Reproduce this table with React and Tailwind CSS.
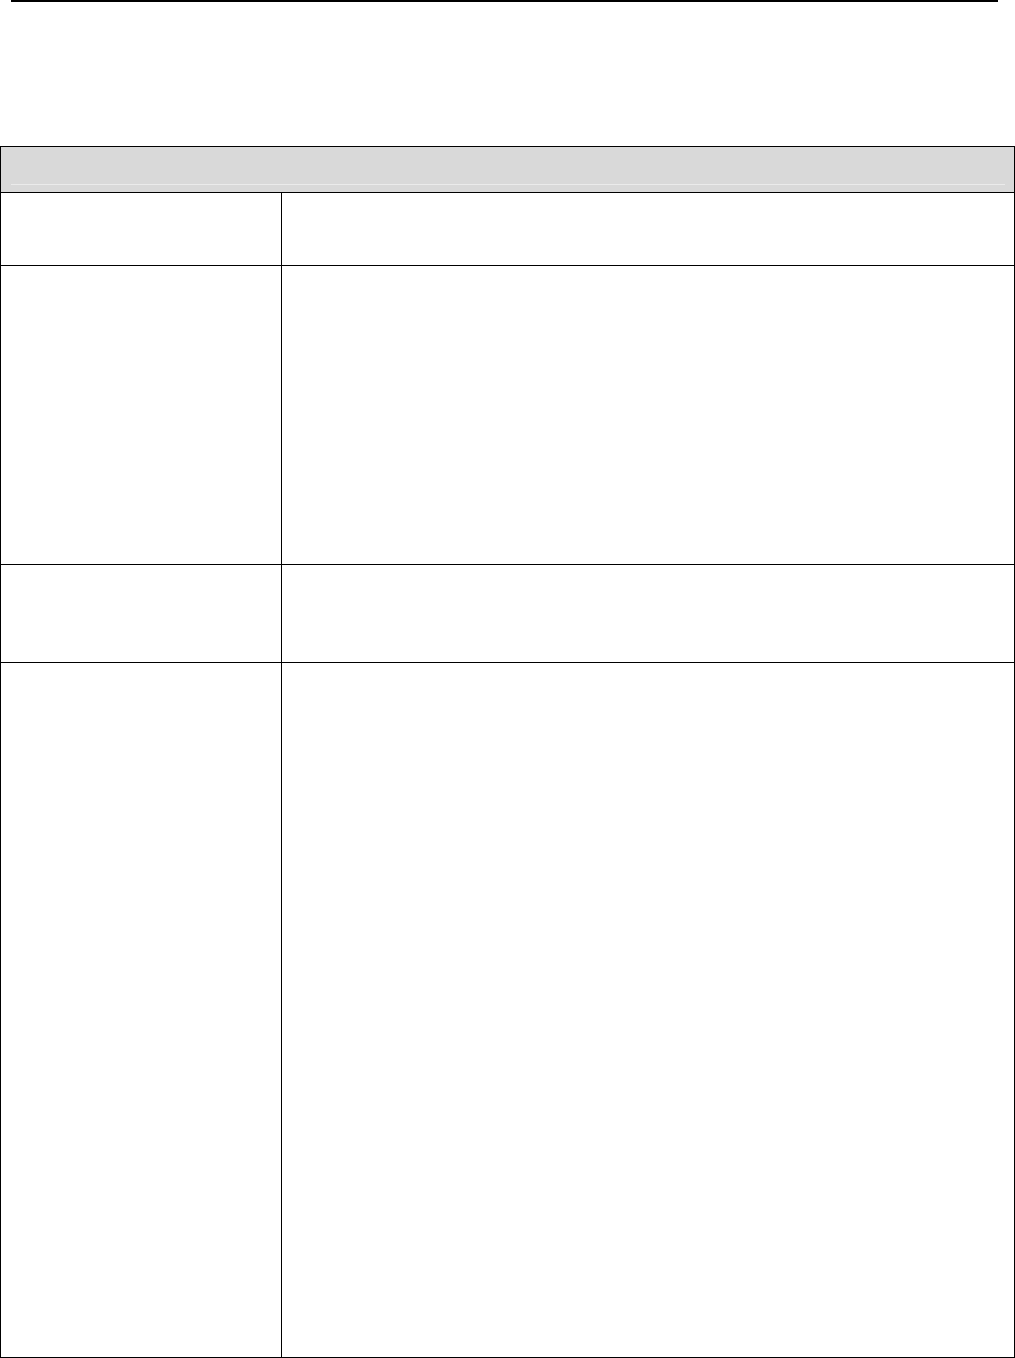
import React from "react";

const rows = [
  { h: "h-[73px]" },
  { h: "h-[299px]" },
  { h: "h-[98px]" },
  { h: "h-[694px]" },
];

const App = () => {
  return (
    <div className="w-[1015px] h-[1358px] bg-white font-['Liberation_Sans',Arial,sans-serif]">
      {/* page header rule */}
      <div className="ml-[11px] w-[987px] h-[2px] bg-black"></div>

      <div className="mt-[144px] w-[1015px] border border-black">
        <div className="h-[46px] bg-[#d9d9d9] border-b border-black pt-[37px] pl-[10px] pr-[9px]">
          <div className="h-px bg-[#ebebeb]"></div>
        </div>
        {rows.map((row, i) => (
          <div
            key={i}
            className={`grid grid-cols-[281px_1fr] ${row.h} ${i < rows.length - 1 ? "border-b border-black" : ""}`}
          >
            <div className="border-r border-black"></div>
            <div></div>
          </div>
        ))}
      </div>
    </div>
  );
};

export default App;
